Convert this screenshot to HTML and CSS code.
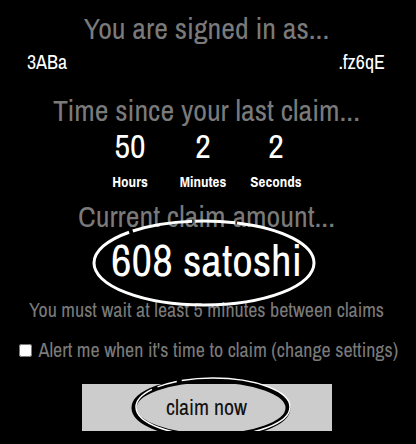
FILE: index.html
```html
<!DOCTYPE html>
<html lang="en">

<head>
    <meta charset="UTF-8">
    <title>Claim</title>
    <link rel="stylesheet" href="styles.css">
</head>

<body>
    <div class="page">
        <h2 class="heading">You are signed in as...</h2>
        <div class="address">
            <span>3ABa</span>
            <span>.fz6qE</span>
        </div>

        <h2 class="heading">Time since your last claim...</h2>
        <div class="timer">
            <div class="unit"><div class="num">50</div><div class="label">Hours</div></div>
            <div class="unit"><div class="num">2</div><div class="label">Minutes</div></div>
            <div class="unit"><div class="num">2</div><div class="label">Seconds</div></div>
        </div>

        <h2 class="heading">Current claim amount...</h2>
        <div class="amount">
            <svg class="ring" width="230" height="92" viewBox="0 0 230 92">
                <ellipse cx="115" cy="46" rx="110" ry="42" fill="none" stroke="#fff" stroke-width="3" stroke-dasharray="300 4 60 3 40 2 400"/>
            </svg>
            608 satoshi
        </div>
        <p class="note">You must wait at least 5 minutes between claims</p>

        <label class="alert"><input type="checkbox"> Alert me when it's time to claim (change settings)</label>

        <div class="claim">
            <div class="claim-btn">
                <svg class="ring" width="166" height="66" viewBox="0 0 166 66">
                    <ellipse cx="82" cy="33" rx="77" ry="28" fill="none" stroke="#000" stroke-width="5"/>
                    <ellipse cx="84" cy="32" rx="77" ry="29" fill="none" stroke="#fff" stroke-width="1.5" stroke-dasharray="200 6 20 5 300"/>
                </svg>
                claim now
            </div>
        </div>
    </div>
</body>

</html>
```

FILE: styles.css
```css
body {
    margin: 0;
    background-color: #000;
    font-family: "Archivo Narrow", "Roboto Condensed", sans-serif;
    text-align: center;
}

.page {
    padding: 10px 3px 0 0;
}

.heading {
    margin: 0;
    font-size: 30px;
    font-weight: normal;
    color: #7a7a7a;
    line-height: 36px;
}

.address {
    display: flex;
    justify-content: space-between;
    padding: 4px 28px 0 27px;
    color: #fff;
    font-size: 20px;
    line-height: 24px;
    margin-bottom: 18px;
}

.timer {
    display: flex;
    justify-content: center;
    gap: 8px;
    padding-right: 7px;
    margin: -4px 0 4px;
    color: #fff;
}

.unit {
    width: 65px;
}

.num {
    font-size: 34px;
    line-height: 44px;
}

.label {
    padding-top: 2px;
    font-size: 15px;
    font-weight: bold;
    line-height: 24px;
}

.amount {
    position: relative;
    color: #fff;
    font-size: 45px;
    line-height: 60px;
    margin: -4px 0 8px;
}

.amount .ring {
    position: absolute;
    left: 89px;
    top: -13px;
}

.note {
    margin: 0;
    color: #7a7a7a;
    font-size: 20px;
    line-height: 24px;
}

.alert {
    display: block;
    margin-top: 17px;
    color: #7a7a7a;
    font-size: 20px;
    line-height: 22px;
}

.claim {
    display: flex;
    justify-content: center;
    margin-top: 23px;
}

.claim-btn {
    position: relative;
    width: 250px;
    height: 47px;
    line-height: 47px;
    background-color: #cccccc;
    color: #111;
    font-size: 22px;
}

.claim-btn .ring {
    position: absolute;
    left: 47px;
    top: -9px;
}
```
